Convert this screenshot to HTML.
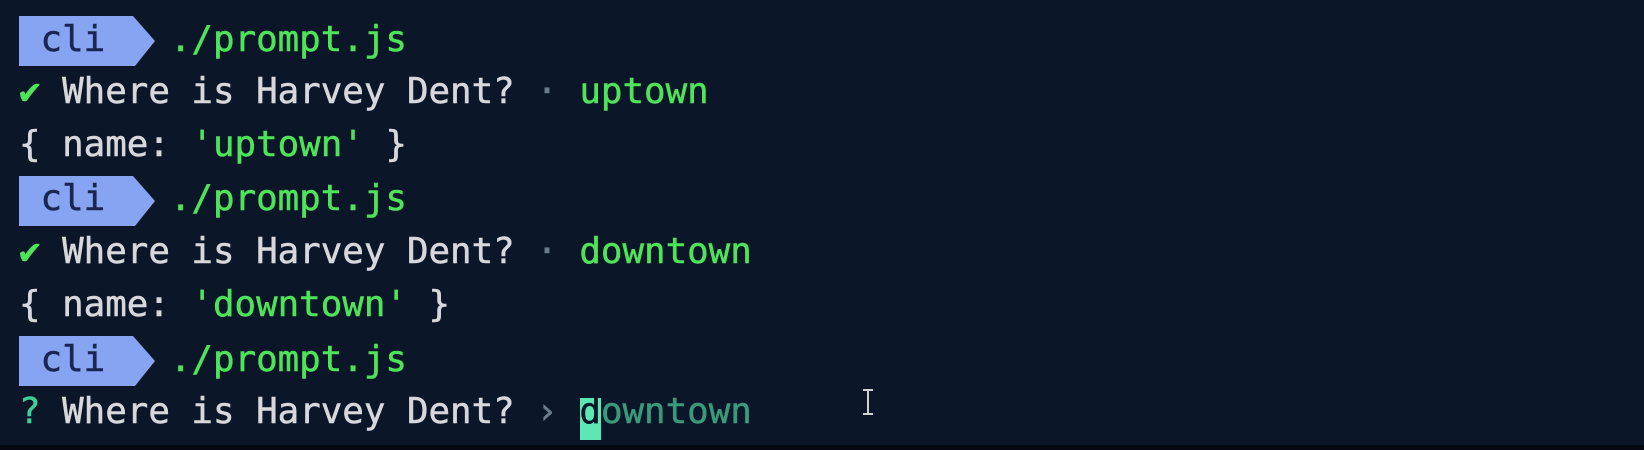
<!DOCTYPE html>
<html><head><meta charset="utf-8"><style>
html,body{margin:0;padding:0;}
body{width:1644px;height:450px;background:#0b1628;position:relative;overflow:hidden;font-family:"DejaVu Sans Mono","Liberation Mono",monospace;}
.l{position:absolute;left:19px;height:52px;line-height:52px;font-size:35.8px;white-space:pre;color:#d6d8dc;-webkit-text-stroke:0.5px currentColor;}
.g{color:#4fe35a}
.d{color:#6b7a8c}
.t{color:#3fcf98}
.dim{color:#3a9a7c}
.badge{position:absolute;left:19px;width:136px;height:50px;}
.cur{position:absolute;left:580px;top:398px;width:21px;height:42px;background:#5ce8b4}
.bot{position:absolute;left:0;top:445px;width:1644px;height:5px;background:#05080e}
</style></head><body>
<svg class="badge" style="top:16px" viewBox="0 0 136 50"><polygon points="0,0 114,0 136,25 116,50 0,50" fill="#87a4f2"/></svg>
<svg class="badge" style="top:176px" viewBox="0 0 136 50"><polygon points="0,0 114,0 136,25 116,50 0,50" fill="#87a4f2"/></svg>
<svg class="badge" style="top:336px" viewBox="0 0 136 50"><polygon points="0,0 114,0 136,25 116,50 0,50" fill="#87a4f2"/></svg>
<div class="cur"></div>

<div class="l" style="top:14px"><span style="color:#1a2550"> cli</span>   <span class="g">./prompt.js</span></div>
<div class="l" style="top:66px"><span class="g">✔</span> Where is Harvey Dent? <span class="d">·</span> <span class="g">uptown</span></div>
<div class="l" style="top:119px">{ name: <span class="g">'uptown'</span> }</div>
<div class="l" style="top:173px"><span style="color:#1a2550"> cli</span>   <span class="g">./prompt.js</span></div>
<div class="l" style="top:226px"><span class="g">✔</span> Where is Harvey Dent? <span class="d">·</span> <span class="g">downtown</span></div>
<div class="l" style="top:279px">{ name: <span class="g">'downtown'</span> }</div>
<div class="l" style="top:334px"><span style="color:#1a2550"> cli</span>   <span class="g">./prompt.js</span></div>
<div class="l" style="top:386px"><span class="t">?</span> Where is Harvey Dent? <span class="d">›</span> <span style="color:#0b1628">d</span><span class="dim">owntown</span></div>
<svg style="position:absolute;left:860px;top:389px" width="16" height="26" viewBox="0 0 16 26"><path d="M3 1h10M8 1v24M3 25h10" stroke="#d0d0d0" stroke-width="2" fill="none"/></svg>
<div class="bot"></div>
</body></html>
